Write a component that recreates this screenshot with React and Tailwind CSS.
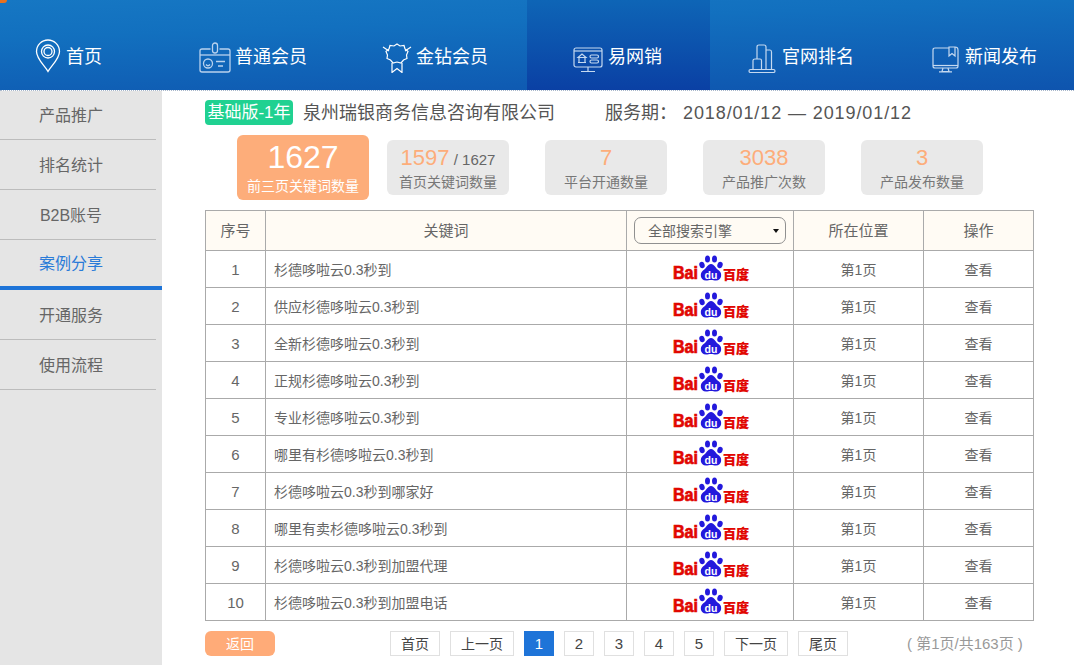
const FONT = '"Liberation Sans","Noto Sans CJK SC",sans-serif';

function PinIcon() {
  return (
    <svg width="26" height="34" viewBox="0 0 26 34" fill="none" stroke="#fff" strokeWidth="1.3">
      <path d="M13 32.5 C10 27 1.5 20 1.5 12.5 A11.5 11.5 0 0 1 24.5 12.5 C24.5 20 16 27 13 32.5 Z" />
      <circle cx="13" cy="12.5" r="6.5" />
      <circle cx="13" cy="12.5" r="4" />
    </svg>
  );
}
function BadgeIcon() {
  return (
    <svg width="32" height="31" viewBox="0 0 32 31" fill="none" stroke="#b9d2ee" strokeWidth="1.3">
      <path d="M11.5 7 H3 Q1 7 1 9 V28 Q1 30 3 30 H29 Q31 30 31 28 V9 Q31 7 29 7 H20.5" />
      <path d="M1 13 H31" />
      <rect x="13.5" y="1" width="5" height="10" rx="2.5" />
      <circle cx="9" cy="21.5" r="4.5" />
      <path d="M7 22.5 Q9 25 11 22.5" />
      <path d="M17 19.5 H26 M19 24 H24" />
    </svg>
  );
}
function MedalIcon() {
  return (
    <svg width="30" height="30" viewBox="0 0 30 30" fill="none" stroke="#fff" strokeWidth="1.2">
      <path d="M1 4 L7 8 M29 4 L23 8" />
      <path d="M15 1 L18 3 L22 2.5 L23 6 L26 8.5 L24.5 12 L25 15.5 L21.5 17 L19 20 L15 19 L11 20 L8.5 17 L5 15.5 L5.5 12 L4 8.5 L7 6 L8 2.5 L12 3 Z" />
      <path d="M10 20 V29.5 L15 25.5 L20 29.5 V20" />
    </svg>
  );
}
function ScreenIcon() {
  return (
    <svg width="30" height="26" viewBox="0 0 30 26" fill="none" stroke="#c5d9f0" strokeWidth="1.2">
      <rect x="1" y="1" width="28" height="19" rx="2" />
      <path d="M1 4 H29" />
      <path d="M5 15.5 H13 M6 15.5 V10.5 M12 15.5 V10.5 M5 10.5 L9 7 L13 10.5 Z" />
      <rect x="17" y="8" width="8.5" height="3" rx="1.5" />
      <rect x="17" y="13" width="8.5" height="3" rx="1.5" />
      <path d="M15 20 V24.5 M8 24.5 H22" />
    </svg>
  );
}
function BuildingIcon() {
  return (
    <svg width="28" height="29" viewBox="0 0 28 29" fill="none" stroke="#c5d9f0" strokeWidth="1.2">
      <path d="M9 15 V3 Q9 1 11 1 H16 Q18 1 18 3 V26" />
      <path d="M18 6 H22 Q23.5 6 23.5 8 V26" />
      <path d="M5 26 V16.5 Q5 15 7 15 H12 Q13.5 15 13.5 16.5 V26" />
      <rect x="1" y="25.5" width="26" height="3" rx="1.5" />
    </svg>
  );
}
function BookScreenIcon() {
  return (
    <svg width="27" height="27" viewBox="0 0 27 27" fill="none" stroke="#c5d9f0" strokeWidth="1.2">
      <path d="M17 2 H3 Q1 2 1 4 V20 Q1 22 3 22 H24 Q26 22 26 20 V4 Q26 1 23 1 H17 V10 L20 7.5 L23 10 V1" />
      <path d="M1 19.5 H26" />
      <path d="M11 22 L10 25.5 H17 L16 22 M7 25.8 H20" />
    </svg>
  );
}
function BaiduLogo() {
  return (
    <svg width="76" height="27" viewBox="0 0 76 27" className="block overflow-visible">
      <text x="0" y="25" fontSize="18" fontWeight="700" fill="#e10601" stroke="#e10601" strokeWidth="0.7" fontFamily='"Liberation Sans",sans-serif' textLength="25" lengthAdjust="spacingAndGlyphs">Bai</text>
      <g fill="#2319dc">
        <ellipse cx="29" cy="11" rx="2.6" ry="3.3" transform="rotate(-20 29 11)" />
        <ellipse cx="34.5" cy="5" rx="2.5" ry="3.5" />
        <ellipse cx="41.5" cy="5" rx="2.5" ry="3.5" />
        <ellipse cx="47" cy="11" rx="2.6" ry="3.3" transform="rotate(20 47 11)" />
        <path d="M38 10 C34.5 10 34 14 30 16.5 C26.5 19 27 26.5 33 26.5 C35 26.5 36 26 38 26 C40 26 41 26.5 43 26.5 C49 26.5 49.5 19 46 16.5 C42 14 41.5 10 38 10 Z" />
      </g>
      <text x="38" y="24.5" textAnchor="middle" fontSize="10.5" fontWeight="700" fill="#fff" fontFamily='"Liberation Sans",sans-serif'>du</text>
      <text x="50" y="25" fontSize="13" fontWeight="900" fill="#e10601" stroke="#e10601" strokeWidth="0.2" fontFamily='"Noto Sans CJK SC",sans-serif'>百度</text>
    </svg>
  );
}

const navItems = [
  { label: "首页", icon: <PinIcon />, w: "w-[161px]", pl: "pl-[35px]", gap: "gap-[5px]" },
  { label: "普通会员", icon: <BadgeIcon />, w: "w-[183px]", pl: "pl-[38px]", gap: "gap-1" },
  { label: "金钻会员", icon: <MedalIcon />, w: "w-[183px]", pl: "pl-[38px]", gap: "gap-1" },
  { label: "易网销", icon: <ScreenIcon />, w: "w-[183px]", pl: "pl-[46px]", gap: "gap-[5px]", active: true },
  { label: "官网排名", icon: <BuildingIcon />, w: "w-[183px]", pl: "pl-[38px]", gap: "gap-[6px]" },
  { label: "新闻发布", icon: <BookScreenIcon />, w: "w-[181px]", pl: "pl-[39px]", gap: "gap-[6px]" },
];
const sideItems = ["产品推广", "排名统计", "B2B账号", "案例分享", "开通服务", "使用流程"];
const stats = [
  { n: "1597", extra: " / ", total: "1627", label: "首页关键词数量" },
  { n: "7", label: "平台开通数量" },
  { n: "3038", label: "产品推广次数" },
  { n: "3", label: "产品发布数量" },
];
const rows = [
  "杉德哆啦云0.3秒到",
  "供应杉德哆啦云0.3秒到",
  "全新杉德哆啦云0.3秒到",
  "正规杉德哆啦云0.3秒到",
  "专业杉德哆啦云0.3秒到",
  "哪里有杉德哆啦云0.3秒到",
  "杉德哆啦云0.3秒到哪家好",
  "哪里有卖杉德哆啦云0.3秒到",
  "杉德哆啦云0.3秒到加盟代理",
  "杉德哆啦云0.3秒到加盟电话",
];
const pageBase = "h-[25px] flex items-center justify-center border border-[#e0e0e0] text-[#444] pt-[1px]";
const cell = "border border-[#aaaaaa] pt-[2px]";

export default function App() {
  return (
    <div className="relative h-[665px] w-[1074px] overflow-hidden bg-white" style={{ fontFamily: FONT }}>
      <header className="relative flex h-[90px] bg-[linear-gradient(178deg,#1677c3_0%,#1270bf_30%,#0e54ae_100%)]">
        <div className="absolute left-0 top-0 h-[3px] w-[7px] rounded-br-[4px] bg-[#e8711f]" />
        {navItems.map((it) => (
          <div
            key={it.label}
            className={`flex h-full items-end pb-[17px] ${it.w} ${it.pl} ${it.gap} ${it.active ? "bg-[linear-gradient(180deg,#0e65b6_0%,#0a40a4_100%)]" : ""}`}
          >
            {it.icon}
            <span className="mb-[3px] text-[18px] leading-[26px] text-white">{it.label}</span>
          </div>
        ))}
      </header>
      <div className="h-px border-t border-dotted border-[#a9b8cc]" />
      <div className="flex h-[574px]">
        <aside className="h-full w-[162px] shrink-0 bg-[#e5e5e5]">
          {sideItems.map((s, i) =>
            i === 3 ? (
              <div key={s} className="flex h-[50px] items-center justify-center border-b-4 border-[#1e74d8] pr-[20px] pt-[1px] text-[16px] text-[#2a7bd8]">
                {s}
              </div>
            ) : (
              <div key={s} className={`mr-[6px] flex items-center justify-center border-b border-[#bcbcbc] pr-[14px] text-[16px] text-[#666] ${i === 0 ? "h-[49px] pt-[1px]" : "h-[50px] pt-[2px]"}`}>
                {s}
              </div>
            )
          )}
        </aside>
        <main className="w-[912px] pl-[43px]">
          <div className="flex h-[44px] items-start pt-[9px]">
            <span className="flex h-[25px] w-[88px] items-center justify-center rounded-[4px] bg-[#20d191] text-[17px] text-white">基础版-1年</span>
            <span className="ml-[10px] mt-[1px] text-[18px] leading-[25px] text-[#555]">泉州瑞银商务信息咨询有限公司</span>
            <span className="ml-[50px] mt-[1px] text-[18px] leading-[25px] text-[#555]">服务期：</span>
            <span className="ml-[6px] mt-[1px] text-[18px] leading-[25px] tracking-[0.9px] text-[#555]">2018/01/12 — 2019/01/12</span>
          </div>
          <div className="flex items-center pl-[32px]">
            <div className="flex h-[65px] w-[132px] flex-col items-center rounded-[6px] bg-[#fdad7a] text-white">
              <span className="mt-[3px] text-[32px] leading-[38px]">1627</span>
              <span className="text-[14px] leading-[20px]">前三页关键词数量</span>
            </div>
            <div className="ml-[18px] flex gap-[36px]">
              {stats.map((s) => (
                <div key={s.label} className="flex h-[55px] w-[122px] flex-col items-center rounded-[6px] bg-[#e9e9e9]">
                  <span className="mt-[3px] flex h-[29px] items-baseline leading-[29px] text-[#666]">
                    <span className="text-[22px] text-[#fdad7a]">{s.n}</span>
                    {s.total && <span className="whitespace-pre text-[15px]">{s.extra}{s.total}</span>}
                  </span>
                  <span className="text-[14px] leading-[20px] text-[#777]">{s.label}</span>
                </div>
              ))}
            </div>
          </div>
          <table className="mt-[10px] w-[828px] table-fixed border-collapse text-[14px] text-[#666]">
            <colgroup>
              <col className="w-[60px]" />
              <col className="w-[361px]" />
              <col className="w-[167px]" />
              <col className="w-[130px]" />
              <col className="w-[110px]" />
            </colgroup>
            <thead>
              <tr className="h-[40px] bg-[#fffbf4] text-[15px]">
                <th className={`${cell} font-normal`}>序号</th>
                <th className={`${cell} font-normal`}>关键词</th>
                <th className="border border-[#aaaaaa] px-[7px] font-normal">
                  <div className="relative flex h-[27px] w-[152px] items-center rounded-[7px] border border-[#909090] pl-[13px] pt-[2px] text-[14px]">
                    全部搜索引擎
                    <span className="absolute right-[6px] top-[11px] h-0 w-0 border-x-[3.5px] border-t-[4px] border-x-transparent border-t-[#111]" />
                  </div>
                </th>
                <th className={`${cell} font-normal`}>所在位置</th>
                <th className={`${cell} font-normal`}>操作</th>
              </tr>
            </thead>
            <tbody>
              {rows.map((r, i) => (
                <tr key={i} className="h-[37px]">
                  <td className={`${cell} text-center text-[15px]`}>{i + 1}</td>
                  <td className={`${cell} pl-[8px]`}>{r}</td>
                  <td className="border border-[#aaaaaa] p-0">
                    <div className="flex justify-center pl-[1px] pb-[4px]">
                      <BaiduLogo />
                    </div>
                  </td>
                  <td className={`${cell} text-center`}>第1页</td>
                  <td className={`${cell} text-center`}>查看</td>
                </tr>
              ))}
            </tbody>
          </table>
          <div className="mt-[10px] flex h-[25px] items-center">
            <span className="flex h-[25px] w-[70px] items-center justify-center rounded-[6px] bg-[#ffab78] pt-[1px] text-[14px] text-white">返回</span>
            <div className="ml-[115px] flex gap-[10px]">
              <span className={`${pageBase} w-[50px] text-[14px]`}>首页</span>
              <span className={`${pageBase} w-[64px] text-[14px]`}>上一页</span>
              <span className="flex h-[25px] w-[30px] items-center justify-center bg-[#1e74d8] pt-[1px] text-[15px] text-white">1</span>
              <span className={`${pageBase} w-[30px] text-[15px]`}>2</span>
              <span className={`${pageBase} w-[30px] text-[15px]`}>3</span>
              <span className={`${pageBase} w-[30px] text-[15px]`}>4</span>
              <span className={`${pageBase} w-[30px] text-[15px]`}>5</span>
              <span className={`${pageBase} w-[64px] text-[14px]`}>下一页</span>
              <span className={`${pageBase} w-[50px] text-[14px]`}>尾页</span>
            </div>
            <span className="ml-[59px] whitespace-pre pt-[1px] text-[15px] text-[#999]">( 第1页/共163页 )</span>
          </div>
        </main>
      </div>
    </div>
  );
}
